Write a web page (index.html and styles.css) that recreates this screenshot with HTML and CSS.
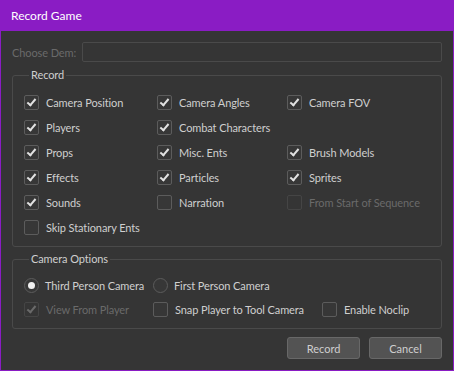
FILE: index.html
```html
<!DOCTYPE html>
<html lang="en">
<head>
    <meta charset="UTF-8">
    <title>Record Game</title>
    <link rel="stylesheet" href="styles.css">
</head>
<body>
    <div class="window">
        <div class="titlebar">Record Game</div>

        <div class="dialog">
            <div class="dem-row">
                <label class="dem-label">Choose Dem:</label>
                <div class="dem-input"></div>
            </div>

            <fieldset class="group">
                <legend>Record</legend>
                <div class="record-grid">
                    <label class="check"><span class="box on"></span>Camera Position</label>
                    <label class="check"><span class="box on"></span>Camera Angles</label>
                    <label class="check"><span class="box on"></span>Camera FOV</label>

                    <label class="check"><span class="box on"></span>Players</label>
                    <label class="check"><span class="box on"></span>Combat Characters</label>
                    <span></span>

                    <label class="check"><span class="box on"></span>Props</label>
                    <label class="check"><span class="box on"></span>Misc. Ents</label>
                    <label class="check"><span class="box on"></span>Brush Models</label>

                    <label class="check"><span class="box on"></span>Effects</label>
                    <label class="check"><span class="box on"></span>Particles</label>
                    <label class="check"><span class="box on"></span>Sprites</label>

                    <label class="check"><span class="box on"></span>Sounds</label>
                    <label class="check"><span class="box"></span>Narration</label>
                    <label class="check disabled"><span class="box"></span>From Start of Sequence</label>

                    <label class="check"><span class="box"></span>Skip Stationary Ents</label>
                </div>
            </fieldset>

            <fieldset class="group camera">
                <legend>Camera Options</legend>
                <div class="camera-grid">
                    <label class="radio"><span class="dot on"></span>Third Person Camera</label>
                    <label class="radio"><span class="dot"></span>First Person Camera</label>
                    <span></span>

                    <label class="check disabled"><span class="box on"></span>View From Player</label>
                    <label class="check"><span class="box"></span>Snap Player to Tool Camera</label>
                    <label class="check"><span class="box"></span>Enable Noclip</label>
                </div>
            </fieldset>

            <div class="buttons">
                <button class="btn">Record</button>
                <button class="btn">Cancel</button>
            </div>
        </div>
    </div>
</body>
</html>
```

FILE: styles.css
```css
html, body {
    margin: 0;
    height: 100%;
}

body {
    background-color: #8a1cc4;
    font-family: 'Lato', sans-serif;
    font-size: 11px;
    letter-spacing: -0.1px;
    color: #cfcfcf;
}

.window {
    width: 454px;
    height: 371px;
    display: flex;
    flex-direction: column;
    box-sizing: border-box;
    border: 1px solid #8a1cc4;
    border-top: none;
}

.titlebar {
    height: 31px;
    line-height: 31px;
    padding-left: 10px;
    color: #ffffff;
    font-size: 12px;
    letter-spacing: 0;
    background-color: #8a1cc4;
}

.dialog {
    flex-grow: 1;
    background-color: #353535;
    padding: 11px 11px 0 11px;
    display: flex;
    flex-direction: column;
}

.dem-row {
    display: flex;
    align-items: center;
    height: 20px;
}

.dem-label {
    width: 70px;
    flex-shrink: 0;
    white-space: nowrap;
    color: #6a6a6a;
}

.dem-input {
    flex-grow: 1;
    height: 18px;
    border: 1px solid #4a4a4a;
    border-radius: 2px;
}

.group {
    margin: 6px 0 0 0;
    padding: 8px 0 6px 11px;
    border: 1px solid #4a4a4a;
    border-radius: 3px;
    min-width: 0;
}

.group legend {
    padding: 0 2px;
    margin-left: 5px;
    line-height: 14px;
    color: #cfcfcf;
}

.record-grid {
    display: grid;
    grid-template-columns: 133px 130px 1fr;
    grid-auto-rows: 25px;
}

.camera {
    margin-top: 5px;
    padding-top: 7px;
    padding-bottom: 7px;
}

.camera-grid {
    display: grid;
    grid-template-columns: 129px 169px 1fr;
    grid-auto-rows: 24px;
}

.check, .radio {
    display: flex;
    align-items: center;
    white-space: nowrap;
}

.box {
    flex-shrink: 0;
    width: 13px;
    height: 13px;
    border: 1px solid #5c5c5c;
    border-radius: 2px;
    background-color: #373737;
    margin-right: 7px;
    position: relative;
}

.box.on::after {
    content: "";
    position: absolute;
    left: 4px;
    top: 1px;
    width: 3px;
    height: 7px;
    border: solid #e2e2e2;
    border-width: 0 2.5px 2.5px 0;
    transform: rotate(40deg);
}

.check.disabled {
    color: #6a6a6a;
}

.check.disabled .box {
    border-color: #454545;
    background-color: #353535;
}

.check.disabled .box.on::after {
    border-color: #6a6a6a;
}

.dot {
    flex-shrink: 0;
    width: 13px;
    height: 13px;
    border: 1px solid #5c5c5c;
    border-radius: 50%;
    background-color: #373737;
    margin-right: 6px;
    display: flex;
    justify-content: center;
    align-items: center;
}

.dot.on::after {
    content: "";
    width: 7px;
    height: 7px;
    border-radius: 50%;
    background-color: #f0f0f0;
}

.buttons {
    display: flex;
    justify-content: flex-end;
    gap: 9px;
    margin-top: 8px;
}

.btn {
    width: 73px;
    height: 22px;
    background-color: #535353;
    border: 1px solid #686868;
    border-radius: 3px;
    color: #cfcfcf;
    font-family: 'Lato', sans-serif;
    font-size: 11px;
    padding: 0;
}
```
